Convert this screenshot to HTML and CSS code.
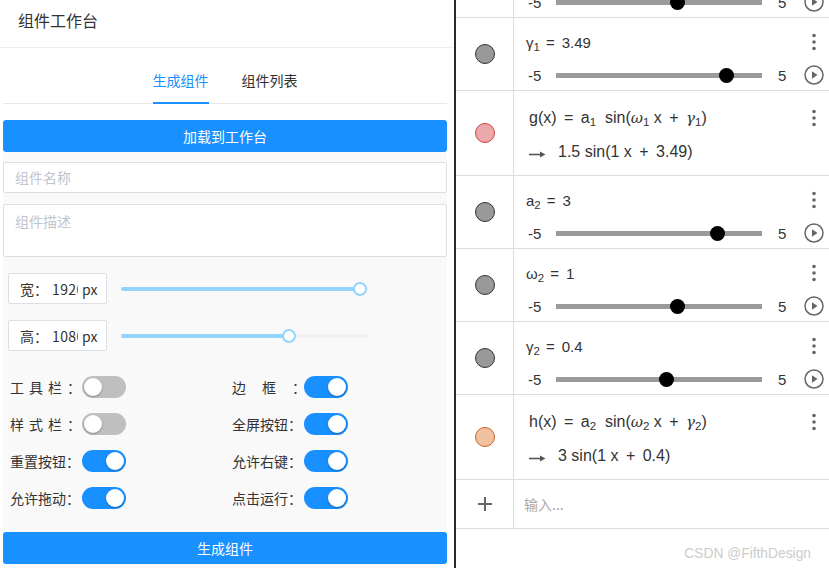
FILE: index.html
```html
<!DOCTYPE html>
<html lang="zh-CN">
<head>
<meta charset="utf-8">
<title>组件工作台</title>
<link rel="stylesheet" href="styles.css">
</head>
<body>
<div class="app">
  <aside class="left">
    <div class="hdr">组件工作台</div>
    <div class="tabs">
      <div class="tab active">生成组件</div>
      <div class="tab">组件列表</div>
    </div>
    <button class="btn load">加载到工作台</button>
    <div class="form">
      <div class="input">组件名称</div>
      <div class="input textarea">组件描述</div>
      <div class="dim-row">
        <div class="dim"><span class="dim-l">宽：</span><span class="dim-v">1920</span><span class="dim-u">px</span></div>
        <div class="slider"><div class="fill" style="width:96.4%"><span class="knob"></span></div></div>
      </div>
      <div class="dim-row">
        <div class="dim"><span class="dim-l">高：</span><span class="dim-v">1080</span><span class="dim-u">px</span></div>
        <div class="slider"><div class="fill" style="width:67.6%"><span class="knob"></span></div></div>
      </div>
      <div class="switches">
        <div class="sw-item"><span class="lbl sp5">工具栏：</span><span class="sw off"></span></div>
        <div class="sw-item"><span class="lbl sp16">边框：</span><span class="sw on"></span></div>
        <div class="sw-item"><span class="lbl sp5">样式栏：</span><span class="sw off"></span></div>
        <div class="sw-item"><span class="lbl">全屏按钮：</span><span class="sw on"></span></div>
        <div class="sw-item"><span class="lbl">重置按钮：</span><span class="sw on"></span></div>
        <div class="sw-item"><span class="lbl">允许右键：</span><span class="sw on"></span></div>
        <div class="sw-item"><span class="lbl">允许拖动：</span><span class="sw on"></span></div>
        <div class="sw-item"><span class="lbl">点击运行：</span><span class="sw on"></span></div>
      </div>
      <button class="btn gen">生成组件</button>
    </div>
  </aside>

  <main class="right">
    <div class="algebra">
      <div class="row">
        <div class="mk"><span class="dot gray"></span></div>
        <div class="body">
          <div class="l1"><span class="expr">ω<sub>1</sub><span class="eq">=</span>1</span><span class="more"><svg width="4" height="18" viewBox="0 0 4 18"><circle cx="2" cy="2.5" r="1.8"/><circle cx="2" cy="9" r="1.8"/><circle cx="2" cy="15.5" r="1.8"/></svg></span></div>
          <div class="sl"><span class="mn">-5</span><span class="trk"><span class="th" style="left:59.2%"></span></span><span class="mx">5</span><span class="play"><svg width="20" height="20" viewBox="0 0 20 20"><circle cx="10" cy="10" r="9" fill="none" stroke="#666" stroke-width="1.5"/><path d="M8 6.3 L13.5 10 L8 13.7 Z" fill="#666"/></svg></span></div>
        </div>
      </div>

      <div class="row">
        <div class="mk"><span class="dot gray"></span></div>
        <div class="body">
          <div class="l1"><span class="expr">γ<sub>1</sub><span class="eq">=</span>3.49</span><span class="more"><svg width="4" height="18" viewBox="0 0 4 18"><circle cx="2" cy="2.5" r="1.8"/><circle cx="2" cy="9" r="1.8"/><circle cx="2" cy="15.5" r="1.8"/></svg></span></div>
          <div class="sl"><span class="mn">-5</span><span class="trk"><span class="th" style="left:83%"></span></span><span class="mx">5</span><span class="play"><svg width="20" height="20" viewBox="0 0 20 20"><circle cx="10" cy="10" r="9" fill="none" stroke="#666" stroke-width="1.5"/><path d="M8 6.3 L13.5 10 L8 13.7 Z" fill="#666"/></svg></span></div>
        </div>
      </div>

      <div class="row">
        <div class="mk"><span class="dot pink"></span></div>
        <div class="body fbody">
          <div class="l1"><span class="fx">g(x) <span class="op">=</span> a<sub>1</sub>  sin(<i>ω</i><sub>1</sub> x <span class="op">+</span> <i>γ</i><sub>1</sub>)</span><span class="more"><svg width="4" height="18" viewBox="0 0 4 18"><circle cx="2" cy="2.5" r="1.8"/><circle cx="2" cy="9" r="1.8"/><circle cx="2" cy="15.5" r="1.8"/></svg></span></div>
          <div class="res"><svg class="arr" width="17" height="8" viewBox="0 0 17 8"><path d="M0 4.5 H13" stroke="#555" stroke-width="1.6"/><path d="M11 1.5 L16.5 4.5 L11 7.5 Z" fill="#555"/></svg><span class="fx">1.5 sin(1 x <span class="op">+</span> 3.49)</span></div>
        </div>
      </div>

      <div class="row">
        <div class="mk"><span class="dot gray"></span></div>
        <div class="body">
          <div class="l1"><span class="expr">a<sub>2</sub><span class="eq">=</span>3</span><span class="more"><svg width="4" height="18" viewBox="0 0 4 18"><circle cx="2" cy="2.5" r="1.8"/><circle cx="2" cy="9" r="1.8"/><circle cx="2" cy="15.5" r="1.8"/></svg></span></div>
          <div class="sl"><span class="mn">-5</span><span class="trk"><span class="th" style="left:78.2%"></span></span><span class="mx">5</span><span class="play"><svg width="20" height="20" viewBox="0 0 20 20"><circle cx="10" cy="10" r="9" fill="none" stroke="#666" stroke-width="1.5"/><path d="M8 6.3 L13.5 10 L8 13.7 Z" fill="#666"/></svg></span></div>
        </div>
      </div>

      <div class="row">
        <div class="mk"><span class="dot gray"></span></div>
        <div class="body">
          <div class="l1"><span class="expr">ω<sub>2</sub><span class="eq">=</span>1</span><span class="more"><svg width="4" height="18" viewBox="0 0 4 18"><circle cx="2" cy="2.5" r="1.8"/><circle cx="2" cy="9" r="1.8"/><circle cx="2" cy="15.5" r="1.8"/></svg></span></div>
          <div class="sl"><span class="mn">-5</span><span class="trk"><span class="th" style="left:59.2%"></span></span><span class="mx">5</span><span class="play"><svg width="20" height="20" viewBox="0 0 20 20"><circle cx="10" cy="10" r="9" fill="none" stroke="#666" stroke-width="1.5"/><path d="M8 6.3 L13.5 10 L8 13.7 Z" fill="#666"/></svg></span></div>
        </div>
      </div>

      <div class="row">
        <div class="mk"><span class="dot gray"></span></div>
        <div class="body">
          <div class="l1"><span class="expr">γ<sub>2</sub><span class="eq">=</span>0.4</span><span class="more"><svg width="4" height="18" viewBox="0 0 4 18"><circle cx="2" cy="2.5" r="1.8"/><circle cx="2" cy="9" r="1.8"/><circle cx="2" cy="15.5" r="1.8"/></svg></span></div>
          <div class="sl"><span class="mn">-5</span><span class="trk"><span class="th" style="left:53.4%"></span></span><span class="mx">5</span><span class="play"><svg width="20" height="20" viewBox="0 0 20 20"><circle cx="10" cy="10" r="9" fill="none" stroke="#666" stroke-width="1.5"/><path d="M8 6.3 L13.5 10 L8 13.7 Z" fill="#666"/></svg></span></div>
        </div>
      </div>

      <div class="row">
        <div class="mk"><span class="dot orange"></span></div>
        <div class="body fbody">
          <div class="l1"><span class="fx">h(x) <span class="op">=</span> a<sub>2</sub>  sin(<i>ω</i><sub>2</sub> x <span class="op">+</span> <i>γ</i><sub>2</sub>)</span><span class="more"><svg width="4" height="18" viewBox="0 0 4 18"><circle cx="2" cy="2.5" r="1.8"/><circle cx="2" cy="9" r="1.8"/><circle cx="2" cy="15.5" r="1.8"/></svg></span></div>
          <div class="res"><svg class="arr" width="17" height="8" viewBox="0 0 17 8"><path d="M0 4.5 H13" stroke="#555" stroke-width="1.6"/><path d="M11 1.5 L16.5 4.5 L11 7.5 Z" fill="#555"/></svg><span class="fx">3 sin(1 x <span class="op">+</span> 0.4)</span></div>
        </div>
      </div>

      <div class="row inp">
        <div class="mk"><svg width="16" height="16" viewBox="0 0 16 16"><path d="M8 1 V15 M1 8 H15" stroke="#666" stroke-width="2"/></svg></div>
        <div class="body ibody">输入...</div>
      </div>
    </div>
    <div class="wm">CSDN @FifthDesign</div>
  </main>
</div>
</body>
</html>
```

FILE: styles.css
```css
* { box-sizing: border-box; }
html, body { margin: 0; padding: 0; }
body {
  width: 829px;
  height: 568px;
  overflow: hidden;
  background: #fff;
  color: #333;
  font-family: "Noto Sans CJK SC", "Noto Sans", sans-serif;
}
.app { display: flex; height: 568px; }

/* ---------- left panel ---------- */
.left {
  width: 456px;
  flex: none;
  border-right: 2px solid #2b2b2b;
  display: flex;
  flex-direction: column;
  background: #fff;
}
.hdr {
  height: 48px;
  border-bottom: 1px solid #eeeeee;
  padding-left: 18px;
  font-size: 16px;
  line-height: 40px;
  color: #333;
}
.tabs {
  height: 56px;
  margin: 0 7px 0 3px;
  border-bottom: 1px solid #e8e8e8;
  display: flex;
  justify-content: center;
  align-items: flex-start;
}
.tab {
  margin: 12px 16.5px 0;
  height: 44px;
  line-height: 40px;
  font-size: 14px;
  color: #303133;
  border-bottom: 2px solid transparent;
}
.tab.active { color: #1890ff; border-bottom-color: #1890ff; }

.btn {
  display: block;
  height: 32px;
  border: 0;
  border-radius: 3px;
  background: #1890ff;
  color: #fff;
  font-family: inherit;
  font-size: 14px;
  padding: 0;
}
.load { width: 444px; margin: 16px 0 0 3px; }

.form {
  flex: 1;
  margin: 0 7px 0 3px;
  padding-top: 10px;
  background: #f9f9f9;
}
.input {
  height: 31px;
  border: 1px solid #dcdfe6;
  border-radius: 2px;
  background: #fff;
  padding: 0 11px;
  font-size: 14px;
  line-height: 29px;
  color: #c0c4cc;
}
.textarea {
  margin-top: 11px;
  height: 53px;
  padding: 5px 11px;
  line-height: 22px;
}
.dim-row {
  display: flex;
  align-items: center;
  margin-top: 16px;
  padding-left: 5px;
}
.dim {
  width: 99px;
  height: 31px;
  border: 1px solid #dcdfe6;
  border-radius: 2px;
  background: #fff;
  display: flex;
  align-items: center;
  padding-left: 11px;
  font-size: 14px;
  color: #333;
  flex: none;
}
.dim-l { width: 28px; flex: none; }
.dim-v { width: 26px; margin-left: 4px; overflow: hidden; white-space: nowrap; flex: none; letter-spacing: 0.4px; }
.dim-u { margin-left: 4px; }
.slider {
  margin-left: 14px;
  width: 248px;
  height: 4px;
  border-radius: 2px;
  background: #f0f0f0;
}
.fill {
  position: relative;
  height: 100%;
  border-radius: 2px;
  background: #91d5ff;
}
.knob {
  position: absolute;
  right: -7px;
  top: -5px;
  width: 14px;
  height: 14px;
  border: 2px solid #91d5ff;
  border-radius: 50%;
  background: #fff;
}
.switches {
  display: grid;
  grid-template-columns: 222px 1fr;
  row-gap: 15px;
  margin-top: 25px;
  padding-left: 7px;
}
.sw-item { display: flex; align-items: center; height: 22px; }
.lbl {
  width: 72px;
  flex: none;
  font-size: 14px;
  white-space: nowrap;
  color: #333;
}
.sp5 { letter-spacing: 5px; }
.sp16 { letter-spacing: 16px; }
.sw {
  position: relative;
  width: 44px;
  height: 22px;
  border-radius: 11px;
  flex: none;
}
.sw::after {
  content: "";
  position: absolute;
  top: 2px;
  left: 2px;
  width: 18px;
  height: 18px;
  border-radius: 50%;
  background: #fff;
  box-shadow: 0 1px 2px rgba(0, 0, 0, 0.3);
}
.sw.on { background: #1890ff; }
.sw.on::after { left: 24px; }
.sw.off { background: #bfbfbf; }
.gen { width: 100%; margin-top: 23px; }

/* ---------- right panel ---------- */
.right {
  flex: 1;
  position: relative;
  overflow: hidden;
  font-family: "Liberation Sans", "DejaVu Sans", sans-serif;
  color: #333;
}
.algebra { margin-top: -55px; }
.row {
  display: grid;
  grid-template-columns: 58px 1fr;
  border-bottom: 1px solid #dcdcdc;
}
.mk {
  border-right: 1px solid #dcdcdc;
  display: flex;
  align-items: center;
  justify-content: center;
}
.dot {
  width: 20px;
  height: 20px;
  border-radius: 50%;
  border: 1px solid #333;
  background: #999;
}
.dot.pink { background: #eba9ab; border-color: #d43b3b; }
.dot.orange { background: #f1c2a0; border-color: #c8602a; }
.body { padding: 14px 5px 5px 12px; }
.l1 {
  display: flex;
  justify-content: space-between;
  align-items: center;
  height: 20px;
  font-size: 15px;
}
.eq { margin: 0 7px 0 6px; }
.more { width: 20px; display: flex; justify-content: center; }
.more svg { fill: #666; }
sub { font-size: 11.5px; vertical-align: -3px; line-height: 0; }
.sl {
  display: flex;
  align-items: center;
  height: 20px;
  margin-top: 13px;
  padding-left: 2px;
  font-size: 15px;
}
.mn { width: 28px; flex: none; }
.trk {
  position: relative;
  width: 206px;
  height: 5px;
  background: #9a9a9a;
  flex: none;
}
.th {
  position: absolute;
  top: 50%;
  width: 15px;
  height: 15px;
  margin: -7.5px 0 0 -7.5px;
  border-radius: 50%;
  background: #000;
}
.mx { margin-left: 16px; }
.play { margin-left: auto; width: 20px; height: 20px; }
.play svg { display: block; }

.fbody { padding: 17px 5px 13px 15px; }
.fx { font-size: 16px; white-space: pre; }
.fx i { font-family: "DejaVu Serif", serif; font-style: italic; font-size: 15px; }
.op { margin: 0 3px; }
.res {
  display: flex;
  align-items: center;
  height: 20px;
  margin-top: 14px;
}
.arr { margin-right: 12px; margin-top: 4px; }

.inp .mk, .inp .body { height: 48px; }
.ibody {
  padding: 0 0 0 10px;
  display: flex;
  align-items: center;
  font-family: "Noto Sans CJK SC", sans-serif;
  font-size: 14px;
  color: #aaa;
}
.wm {
  position: absolute;
  right: 18px;
  bottom: 7px;
  font-size: 13.8px;
  color: #cccccc;
  font-family: "Liberation Sans", sans-serif;
}
```
